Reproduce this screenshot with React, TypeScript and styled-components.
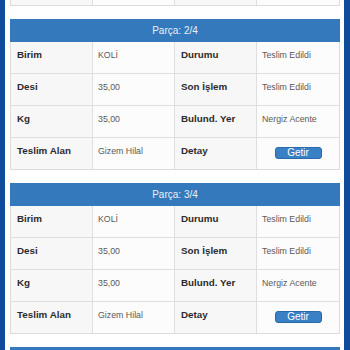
import styled, { createGlobalStyle } from "styled-components";

const GlobalStyle = createGlobalStyle`
  html, body {
    margin: 0;
    padding: 0;
    background: #ffffff;
  }

  body {
    font-family: "Liberation Sans", Arial, Helvetica, sans-serif;
  }
`;

const Frame = styled.div`
  box-sizing: border-box;
  width: 350px;
  height: 350px;
  overflow: hidden;
  background: #ffffff;
  border-left: 5px solid #0e4b98;
  border-right: 6px solid #0e4b98;
  padding: 0 4px 0 5px;
`;

/* list is scrolled so that part 1 only shows its bottom edge */
const CardList = styled.div`
  display: flex;
  flex-direction: column;
  gap: 13px;
  margin-top: -145px;
`;

const StyledCard = styled.section`
  box-sizing: border-box;
  width: 330px;
  border: 1px solid #dcdcdc;
  border-top: none;
  background: #fbfbfb;
`;

const CardHeader = styled.header`
  height: 23px;
  line-height: 23px;
  margin: 0 -1px;
  background-color: #3479bb;
  color: #e9f1f9;
  font-size: 10px;
  text-align: center;
`;

const Grid = styled.div`
  display: grid;
  grid-template-columns: 82px 82px 82px 1fr;
`;

const Cell = styled.div<{ $kind: "label" | "value" | "action" }>`
  box-sizing: border-box;
  height: 32px;
  padding: 6px 0 0 ${({ $kind }) => ($kind === "label" ? "6px" : "5px")};
  border-right: 1px solid #dfdfdf;
  border-bottom: 1px solid #dfdfdf;
  line-height: 14px;
  font-size: ${({ $kind }) => ($kind === "label" ? "9.8px" : "8.8px")};
  font-weight: ${({ $kind }) => ($kind === "label" ? 700 : 400)};
  color: ${({ $kind }) => ($kind === "label" ? "#2b2b2b" : "#5a5a5a")};
  background: ${({ $kind }) => ($kind === "label" ? "#f7f7f7" : "#fcfcfc")};
  white-space: nowrap;

  &:nth-child(4n) {
    border-right: none;
  }

  &:nth-last-child(-n + 4) {
    height: 31px;
    border-bottom: none;
  }

  ${({ $kind }) =>
    $kind === "action"
      ? `
    display: flex;
    justify-content: center;
    padding: 9px 0 0;
  `
      : ""}
`;

const GetButton = styled.button`
  box-sizing: border-box;
  width: 47px;
  height: 12px;
  padding: 0;
  border: 1px solid #2b6aa8;
  border-radius: 3px;
  background: #3a80c4;
  color: #ffffff;
  font-family: inherit;
  font-size: 10px;
  line-height: 10px;
  cursor: pointer;
`;

type Part = {
  index: number;
  total: number;
  unit: string;
  status: string;
  desi: string;
  lastAction: string;
  kg: string;
  location: string;
  receiver: string;
};

const parts: Part[] = [1, 2, 3, 4].map((index) => ({
  index,
  total: 4,
  unit: "KOLİ",
  status: "Teslim Edildi",
  desi: "35,00",
  lastAction: "Teslim Edildi",
  kg: "35,00",
  location: "Nergiz Acente",
  receiver: "Gizem Hilal",
}));

const PartCard = ({ part }: { part: Part }) => {
  return (
    <StyledCard>
      <CardHeader>
        Parça: {part.index}/{part.total}
      </CardHeader>
      <Grid>
        <Cell $kind="label">Birim</Cell>
        <Cell $kind="value">{part.unit}</Cell>
        <Cell $kind="label">Durumu</Cell>
        <Cell $kind="value">{part.status}</Cell>

        <Cell $kind="label">Desi</Cell>
        <Cell $kind="value">{part.desi}</Cell>
        <Cell $kind="label">Son İşlem</Cell>
        <Cell $kind="value">{part.lastAction}</Cell>

        <Cell $kind="label">Kg</Cell>
        <Cell $kind="value">{part.kg}</Cell>
        <Cell $kind="label">Bulund. Yer</Cell>
        <Cell $kind="value">{part.location}</Cell>

        <Cell $kind="label">Teslim Alan</Cell>
        <Cell $kind="value">{part.receiver}</Cell>
        <Cell $kind="label">Detay</Cell>
        <Cell $kind="action">
          <GetButton type="button">Getir</GetButton>
        </Cell>
      </Grid>
    </StyledCard>
  );
};

const App = () => {
  return (
    <>
      <GlobalStyle />
      <Frame>
        <CardList>
          {parts.map((part) => (
            <PartCard key={part.index} part={part} />
          ))}
        </CardList>
      </Frame>
    </>
  );
};

export default App;
